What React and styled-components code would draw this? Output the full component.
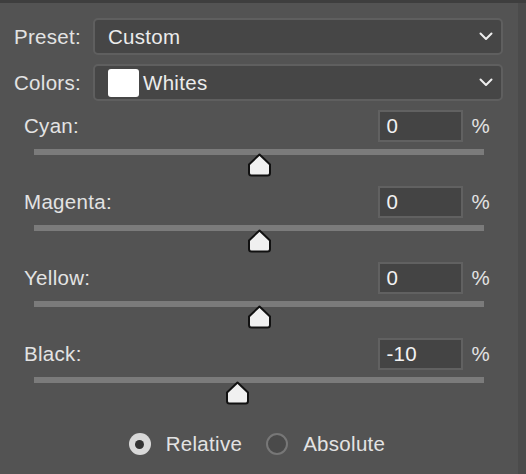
import React from "react";
import styled, { createGlobalStyle } from "styled-components";

const GlobalStyle = createGlobalStyle`
  body {
    margin: 0;
    background: #535353;
    font-family: "Liberation Sans", Arial, sans-serif;
  }
`;

const Frame = styled.div`
  display: flex;
  width: 526px;
  height: 474px;
  background: #535353;
  border-top: 3px solid #3e3e3e;
  box-sizing: border-box;
`;

const Panel = styled.div`
  width: 518px;
  padding-top: 15px;
  color: #e3e3e3;
  font-size: 20.5px;
  letter-spacing: 0.3px;
`;

const SideStrip = styled.div`
  width: 8px;
  background: #4b4b4b;
`;

const FieldRow = styled.div`
  display: flex;
  align-items: center;
  margin: 0 15px 9px 14px;
`;

const FieldLabel = styled.span`
  width: 79px;
`;

const Select = styled.div`
  flex: 1;
  height: 37px;
  box-sizing: border-box;
  display: flex;
  align-items: center;
  padding: 0 8px 0 13px;
  background: #464646;
  border: 2px solid #5f5f5f;
  border-radius: 5px;
  color: #ececec;
`;

const SelectText = styled.span`
  flex: 1;
`;

const Swatch = styled.span`
  width: 31px;
  height: 28px;
  margin-right: 4px;
  border-radius: 3px;
  background: #ffffff;
`;

const Sliders = styled.div`
  margin-top: 1px;
`;

const SliderBlock = styled.div`
  padding-bottom: 31px;
`;

const SliderHead = styled.div`
  display: flex;
  align-items: center;
  padding: 0 28px 0 24px;
  margin-bottom: 7px;
`;

const SliderLabel = styled.span`
  flex: 1;
`;

const ValueBox = styled.div`
  width: 85px;
  height: 32px;
  box-sizing: border-box;
  padding-left: 6px;
  display: flex;
  align-items: center;
  background: #444444;
  border: 2px solid #616161;
  color: #f2f2f2;
`;

const Percent = styled.span`
  margin-left: 8px;
`;

const Track = styled.div`
  position: relative;
  margin-left: 34px;
  width: 450px;
  height: 6px;
  background: #7b7b7b;
`;

const Thumb = styled.svg`
  position: absolute;
  top: 4px;
  margin-left: -12px;
`;

const RadioRow = styled.div`
  display: flex;
  justify-content: center;
  align-items: center;
  margin-top: 18px;
  padding-right: 4px;
`;

const RadioOption = styled.label`
  display: flex;
  align-items: center;
  gap: 15px;
  margin-right: ${(p) => (p.$first ? "24px" : "0")};
`;

const RadioDot = styled.span`
  width: 22px;
  height: 22px;
  box-sizing: border-box;
  border-radius: 50%;
  display: flex;
  align-items: center;
  justify-content: center;
  background: ${(p) => (p.$checked ? "#d9d9d9" : "#4a4a4a")};
  border: ${(p) => (p.$checked ? "none" : "2px solid #777777")};

  &::after {
    content: "";
    display: ${(p) => (p.$checked ? "block" : "none")};
    width: 9px;
    height: 9px;
    border-radius: 50%;
    background: #333333;
  }
`;

const Chevron = () => (
  <svg width="14" height="9" viewBox="0 0 14 9">
    <path d="M1.5 1.5 L7 7 L12.5 1.5" fill="none" stroke="#eeeeee" strokeWidth="2" strokeLinecap="round" strokeLinejoin="round" />
  </svg>
);

const sliders = [
  { name: "Cyan", value: 0 },
  { name: "Magenta", value: 0 },
  { name: "Yellow", value: 0 },
  { name: "Black", value: -10 },
];

export default function App() {
  return (
    <>
      <GlobalStyle />
      <Frame>
        <Panel>
          <FieldRow>
            <FieldLabel>Preset:</FieldLabel>
            <Select>
              <SelectText>Custom</SelectText>
              <Chevron />
            </Select>
          </FieldRow>
          <FieldRow>
            <FieldLabel>Colors:</FieldLabel>
            <Select>
              <Swatch />
              <SelectText>Whites</SelectText>
              <Chevron />
            </Select>
          </FieldRow>
          <Sliders>
            {sliders.map((s) => (
              <SliderBlock key={s.name}>
                <SliderHead>
                  <SliderLabel>{s.name}:</SliderLabel>
                  <ValueBox>{s.value}</ValueBox>
                  <Percent>%</Percent>
                </SliderHead>
                <Track>
                  <Thumb
                    width="25"
                    height="24"
                    viewBox="0 0 25 24"
                    style={{ left: `${((s.value + 100) / 200) * 100}%` }}
                  >
                    <path
                      d="M12.5 1.5 L23 11.5 V20 Q23 22.5 20.5 22.5 H4.5 Q2 22.5 2 20 V11.5 Z"
                      fill="#f0f0f0"
                      stroke="#111111"
                      strokeWidth="2"
                      strokeLinejoin="round"
                    />
                  </Thumb>
                </Track>
              </SliderBlock>
            ))}
          </Sliders>
          <RadioRow>
            <RadioOption $first>
              <RadioDot $checked />
              Relative
            </RadioOption>
            <RadioOption>
              <RadioDot />
              Absolute
            </RadioOption>
          </RadioRow>
        </Panel>
        <SideStrip />
      </Frame>
    </>
  );
}
